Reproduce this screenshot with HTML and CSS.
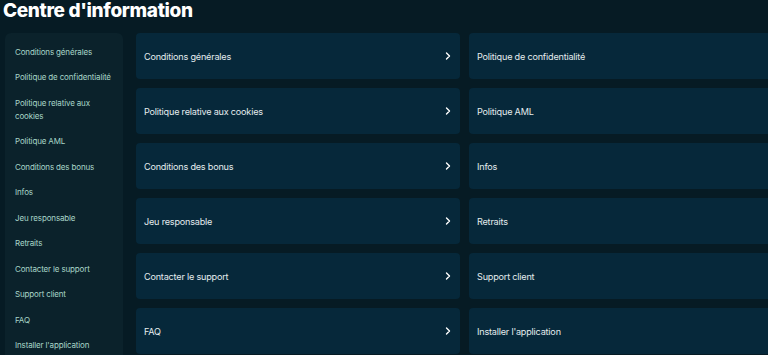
FILE: index.html
```html
<!DOCTYPE html>
<html lang="fr">
<head>
    <meta charset="UTF-8">
    <meta name="viewport" content="width=device-width, initial-scale=1.0">
    <title>Centre d'information</title>
    <link rel="stylesheet" href="styles.css">
</head>
<body>
<div class="page">
    <h1>Centre d'information</h1>

    <div class="info-layout">
        <nav class="side-menu">
            <a href="#">Conditions générales</a>
            <a href="#">Politique de confidentialité</a>
            <a href="#">Politique relative aux cookies</a>
            <a href="#">Politique AML</a>
            <a href="#">Conditions des bonus</a>
            <a href="#">Infos</a>
            <a href="#">Jeu responsable</a>
            <a href="#">Retraits</a>
            <a href="#">Contacter le support</a>
            <a href="#">Support client</a>
            <a href="#">FAQ</a>
            <a href="#">Installer l'application</a>
        </nav>

        <div class="info-grid">
            <a class="info-card" href="#"><span>Conditions générales</span><svg class="chevron" viewBox="0 0 6 8"><path d="M1.5 1 L4.5 4 L1.5 7"/></svg></a>
            <a class="info-card" href="#"><span>Politique de confidentialité</span><svg class="chevron" viewBox="0 0 6 8"><path d="M1.5 1 L4.5 4 L1.5 7"/></svg></a>
            <a class="info-card" href="#"><span>Politique relative aux cookies</span><svg class="chevron" viewBox="0 0 6 8"><path d="M1.5 1 L4.5 4 L1.5 7"/></svg></a>
            <a class="info-card" href="#"><span>Politique AML</span><svg class="chevron" viewBox="0 0 6 8"><path d="M1.5 1 L4.5 4 L1.5 7"/></svg></a>
            <a class="info-card" href="#"><span>Conditions des bonus</span><svg class="chevron" viewBox="0 0 6 8"><path d="M1.5 1 L4.5 4 L1.5 7"/></svg></a>
            <a class="info-card" href="#"><span>Infos</span><svg class="chevron" viewBox="0 0 6 8"><path d="M1.5 1 L4.5 4 L1.5 7"/></svg></a>
            <a class="info-card" href="#"><span>Jeu responsable</span><svg class="chevron" viewBox="0 0 6 8"><path d="M1.5 1 L4.5 4 L1.5 7"/></svg></a>
            <a class="info-card" href="#"><span>Retraits</span><svg class="chevron" viewBox="0 0 6 8"><path d="M1.5 1 L4.5 4 L1.5 7"/></svg></a>
            <a class="info-card" href="#"><span>Contacter le support</span><svg class="chevron" viewBox="0 0 6 8"><path d="M1.5 1 L4.5 4 L1.5 7"/></svg></a>
            <a class="info-card" href="#"><span>Support client</span><svg class="chevron" viewBox="0 0 6 8"><path d="M1.5 1 L4.5 4 L1.5 7"/></svg></a>
            <a class="info-card" href="#"><span>FAQ</span><svg class="chevron" viewBox="0 0 6 8"><path d="M1.5 1 L4.5 4 L1.5 7"/></svg></a>
            <a class="info-card" href="#"><span>Installer l'application</span><svg class="chevron" viewBox="0 0 6 8"><path d="M1.5 1 L4.5 4 L1.5 7"/></svg></a>
        </div>
    </div>
</div>
</body>
</html>
```

FILE: styles.css
```css
* {
    margin: 0;
    padding: 0;
    box-sizing: border-box;
}

html, body {
    background-color: #061b24;
    overflow: hidden;
}

body {
    font-family: Inter, 'Noto Sans', sans-serif;
    color: #e6eef0;
}

a {
    text-decoration: none;
    color: inherit;
}

.page {
    width: 1100px;
    padding: 0 0 0 3px;
}

h1 {
    font-size: 19px;
    font-weight: 800;
    line-height: 22px;
    height: 33px;
    color: #ffffff;
    letter-spacing: -0.35px;
}

.info-layout {
    display: flex;
    align-items: flex-start;
    gap: 13px;
    padding-left: 2px;
}

.side-menu {
    width: 118px;
    flex-shrink: 0;
    background: #0b222b;
    border-radius: 6px;
    padding: 12.5px 4px 12px 10px;
    display: flex;
    flex-direction: column;
    gap: 12.5px;
}

.side-menu a {
    font-size: 8px;
    line-height: 13px;
    letter-spacing: -0.15px;
    color: #a8d6c8;
}

.info-grid {
    display: grid;
    grid-template-columns: 324px 324px;
    gap: 9px;
}

.info-card {
    height: 46px;
    background: #06283a;
    border-radius: 4px;
    padding: 0 9px 0 8px;
    display: flex;
    align-items: center;
    justify-content: space-between;
    font-size: 9.1px;
    letter-spacing: -0.2px;
    color: #e4ecee;
}

.chevron {
    width: 6px;
    height: 8px;
    fill: none;
    stroke: #ffffff;
    stroke-width: 1.4;
    stroke-linecap: round;
    stroke-linejoin: round;
}
```
